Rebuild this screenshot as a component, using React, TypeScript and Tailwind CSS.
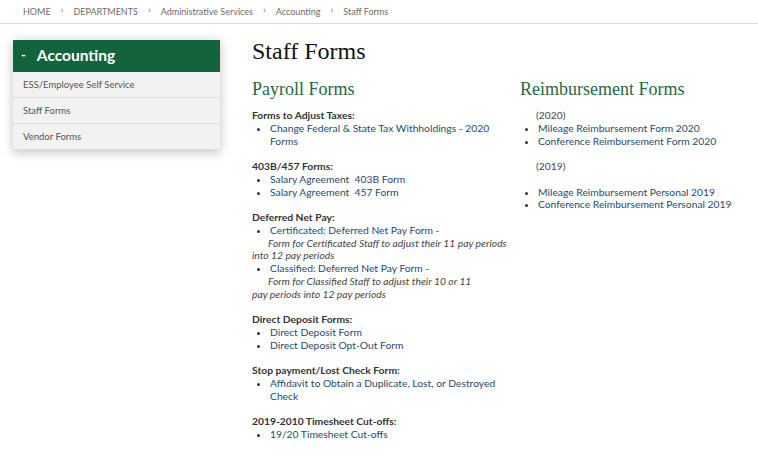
import React from "react";

const crumbs = ["HOME", "DEPARTMENTS", "Administrative Services", "Accounting", "Staff Forms"];

function Crumbs() {
  return (
    <div className="flex items-center h-[24px] border-b border-[#dcdcdc] pl-[23px] text-[9px] text-[#6b6b6b]">
      {crumbs.map((c, i) => (
        <React.Fragment key={c}>
          {i > 0 && <span className="mx-[10px] text-[10px] -translate-y-[2px] text-[#777]">&#8250;</span>}
          <span>{c}</span>
        </React.Fragment>
      ))}
    </div>
  );
}

function SideNav() {
  const items = ["ESS/Employee Self Service", "Staff Forms", "Vendor Forms"];
  return (
    <div className="w-[207px] shadow-[0_2px_10px_rgba(0,0,0,0.25)]">
      <div className="flex items-center h-[32px] bg-[#13633d] text-white">
        <span className="ml-[8px] text-[13px] font-bold">-</span>
        <span className="ml-[11px] text-[15.5px] font-bold">Accounting</span>
      </div>
      {items.map((t) => (
        <div
          key={t}
          className="flex items-center h-[26px] pl-[10px] pt-[2px] bg-[#f2f2f2] border-b border-[#dcdcdc] text-[9.5px] text-[#555]"
        >
          {t}
        </div>
      ))}
    </div>
  );
}

function Heading({ children }: { children: React.ReactNode }) {
  return <div className="font-bold text-[#333]">{children}</div>;
}

function Links({ items }: { items: string[] }) {
  return (
    <ul className="list-disc pl-[18px] marker:text-[#333]">
      {items.map((t) => (
        <li key={t} className="text-[#1d4b6e]">
          {t}
        </li>
      ))}
    </ul>
  );
}

function Note({ children }: { children: React.ReactNode }) {
  return <div className="italic text-[#444] indent-[16px]">{children}</div>;
}

const serif = { fontFamily: '"Liberation Serif", "DejaVu Serif", serif' };

export default function App() {
  return (
    <div
      className="w-[758px] h-[467px] bg-white overflow-hidden"
      style={{ fontFamily: 'Lato, "Open Sans", sans-serif' }}
    >
      <Crumbs />
      <div className="flex">
        <div className="pl-[13px] pt-[16px]">
          <SideNav />
        </div>
        <div className="ml-[32px] pt-[13px]">
          <h1 style={serif} className="text-[24px] leading-[28px] text-[#111]">
            Staff Forms
          </h1>
          <div className="flex mt-[13px]">
            <div className="w-[262px] text-[10.3px] leading-[12.75px]">
              <h2 style={serif} className="text-[18px] leading-[22px] text-[#1f6a3f] mb-[9px]">
                Payroll Forms
              </h2>
              <Heading>Forms to Adjust Taxes:</Heading>
              <Links items={["Change Federal & State Tax Withholdings - 2020 Forms"]} />
              <div className="h-[12.75px]" />
              <Heading>403B/457 Forms:</Heading>
              <Links items={["Salary Agreement\u00a0 403B Form", "Salary Agreement\u00a0 457 Form"]} />
              <div className="h-[12.75px]" />
              <Heading>Deferred Net Pay:</Heading>
              <Links items={["Certificated: Deferred Net Pay Form -"]} />
              <Note>Form for Certificated Staff to adjust their 11 pay periods into 12 pay periods</Note>
              <Links items={["Classified: Deferred Net Pay Form -"]} />
              <Note>
                Form for Classified Staff to adjust their 10 or 11
                <br />
                pay periods into 12 pay periods
              </Note>
              <div className="h-[12.75px]" />
              <Heading>Direct Deposit Forms:</Heading>
              <Links items={["Direct Deposit Form", "Direct Deposit Opt-Out Form"]} />
              <div className="h-[12.75px]" />
              <Heading>Stop payment/Lost Check Form:</Heading>
              <Links items={["Affidavit to Obtain a Duplicate, Lost, or Destroyed Check"]} />
              <div className="h-[12.75px]" />
              <Heading>2019-2010 Timesheet Cut-offs:</Heading>
              <Links items={["19/20 Timesheet Cut-offs"]} />
            </div>
            <div className="ml-[6px] text-[10.3px] leading-[12.75px]">
              <h2 style={serif} className="text-[18px] leading-[22px] text-[#1f6a3f] mb-[9px]">
                Reimbursement Forms
              </h2>
              <div className="pl-[16px] text-[#444]">(2020)</div>
              <Links items={["Mileage Reimbursement Form 2020", "Conference Reimbursement Form 2020"]} />
              <div className="h-[12.75px]" />
              <div className="pl-[16px] text-[#444]">(2019)</div>
              <div className="h-[12.75px]" />
              <Links items={["Mileage Reimbursement Personal 2019", "Conference Reimbursement Personal 2019"]} />
            </div>
          </div>
        </div>
      </div>
    </div>
  );
}
